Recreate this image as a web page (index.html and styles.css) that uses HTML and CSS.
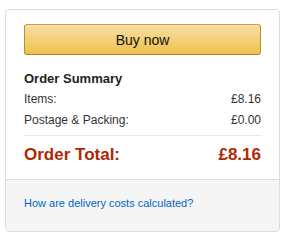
FILE: index.html
```html
<!DOCTYPE html>
<html>
<head>
<meta charset="utf-8">
<link rel="stylesheet" href="styles.css">
</head>
<body>
<div class="card">
  <div class="main">
    <button class="buy">Buy now</button>
    <h2 class="title">Order Summary</h2>
    <div class="row"><span>Items:</span><span>£8.16</span></div>
    <div class="row"><span>Postage &amp; Packing:</span><span>£0.00</span></div>
    <div class="total"><span>Order Total:</span><span>£8.16</span></div>
  </div>
  <div class="foot">
    <a class="link" href="#">How are delivery costs calculated?</a>
  </div>
</div>
</body>
</html>
```
FILE: styles.css
```css
body {
  margin: 9px 9px 0 5px;
  font-family: "Liberation Sans", Arial, sans-serif;
  color: #333;
  background: #fff;
}
.card {
  width: 273px;
  border: 1px solid #ddd;
  border-radius: 4px;
  overflow: hidden;
}
.main {
  padding: 14px 18px 0 18px;
}
.buy {
  display: block;
  width: 100%;
  height: 31px;
  border: 1px solid;
  border-color: #c9a13c #b99030 #a88734;
  border-radius: 3px;
  background: linear-gradient(to bottom, #f7dfa5, #f0c14b);
  font-family: "Liberation Sans", Arial, sans-serif;
  font-size: 14px;
  color: #111;
  padding: 0;
}
.title {
  margin: 14px 0 0 0;
  font-size: 13px;
  font-weight: bold;
  line-height: 19px;
  color: #222;
}
.row {
  display: flex;
  justify-content: space-between;
  font-size: 12px;
  line-height: 20px;
  color: #333;
  margin-top: 1px;
}
.total {
  display: flex;
  justify-content: space-between;
  border-top: 1px solid #e7e7e7;
  margin-top: 5px;
  padding: 7px 0 12px;
  font-size: 17px;
  font-weight: bold;
  line-height: 24px;
  color: #b12704;
}
.foot {
  border-top: 1px solid #ddd;
  background: #f5f5f5;
  padding: 15px 18px 20px;
}
.link {
  display: block;
  font-size: 11px;
  line-height: 16px;
  color: #0066c0;
  text-decoration: none;
}
```
